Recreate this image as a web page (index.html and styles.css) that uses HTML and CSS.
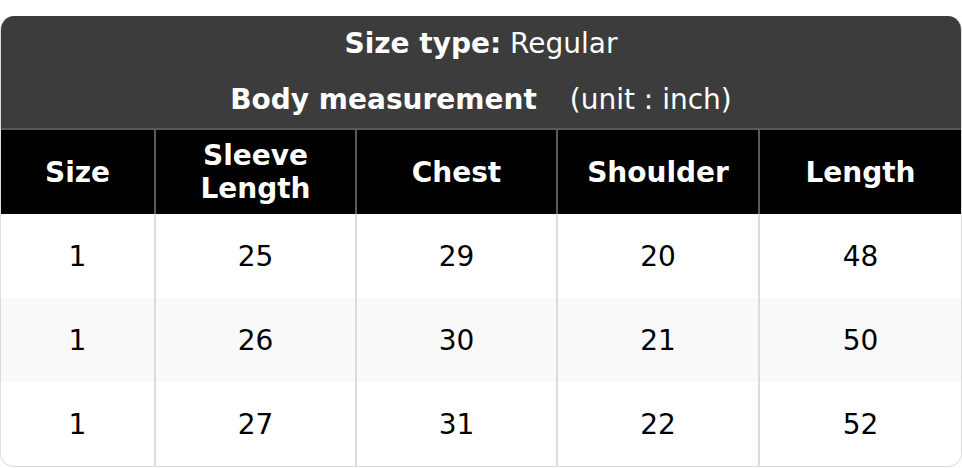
FILE: index.html
```html
<!DOCTYPE html>
<html>
<head>
<meta charset="utf-8">
<link rel="stylesheet" href="styles.css">
</head>
<body>
<div class="chart">
  <div class="head">
    <div class="head-line"><b>Size type:</b> Regular</div>
    <div class="head-line"><b>Body measurement</b><span class="unit">(unit : inch)</span></div>
  </div>
  <table class="grid">
    <colgroup>
      <col class="c1"><col class="c2"><col class="c3"><col class="c4"><col class="c5">
    </colgroup>
    <thead>
      <tr><th>Size</th><th>Sleeve<br>Length</th><th>Chest</th><th>Shoulder</th><th>Length</th></tr>
    </thead>
    <tbody>
      <tr><td>1</td><td>25</td><td>29</td><td>20</td><td>48</td></tr>
      <tr><td>1</td><td>26</td><td>30</td><td>21</td><td>50</td></tr>
      <tr><td>1</td><td>27</td><td>31</td><td>22</td><td>52</td></tr>
    </tbody>
  </table>
</div>
</body>
</html>
```
FILE: styles.css
```css
html, body { margin: 0; padding: 0; background: #fff; }
body { padding-top: 16px; font-family: "DejaVu Sans", Verdana, sans-serif; }
.chart {
  width: 962px;
  box-sizing: border-box;
  border: 1px solid #dcdcdc;
  border-top: none;
  border-radius: 14px;
  overflow: hidden;
}
.head { background: #3c3c3c; color: #fff; text-align: center; font-size: 28px; }
.head-line { height: 56px; line-height: 56px; }
.head b { font-weight: bold; }
.unit { margin-left: 33px; }
.grid { width: 100%; border-collapse: collapse; table-layout: fixed; }
.c1 { width: 154px; }
.c2 { width: 201px; }
.c3 { width: 201px; }
.c4 { width: 202px; }
.grid th {
  background: #000; color: #fff; font-weight: bold; font-size: 28px;
  height: 84px; line-height: 33px; padding: 0;
  border-top: 2px solid #5a5a5a;
  border-left: 2px solid #5a5a5a;
}
.grid td {
  height: 84px; padding: 0; text-align: center; font-size: 28px; color: #000;
  border-left: 2px solid #dcdcdc;
}
.grid th:first-child, .grid td:first-child { border-left: none; }
.grid tbody tr:nth-child(2) td { background: #f9f9f9; }
```
